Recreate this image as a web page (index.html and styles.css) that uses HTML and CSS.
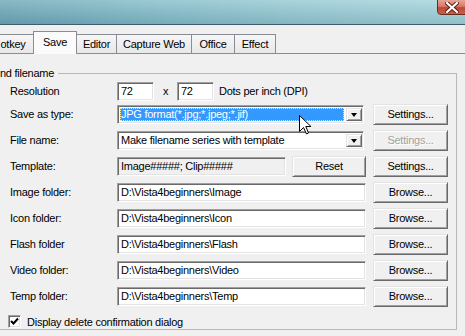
FILE: index.html
```html
<!DOCTYPE html>
<html>
<head>
<meta charset="utf-8">
<link rel="stylesheet" href="styles.css">
</head>
<body>
<div class="titlebar">
  <div class="close">
    <svg width="14" height="11" viewBox="0 0 14 11"><path d="M2 1 L12 10 M12 1 L2 10" stroke="#5a1a10" stroke-width="4" stroke-linecap="square"/><path d="M2 1 L12 10 M12 1 L2 10" stroke="#ffffff" stroke-width="2.2" stroke-linecap="square"/></svg>
  </div>
</div>
<div class="tabs">
  <div class="tab t-first">otkey</div>
  <div class="tab t-save active">Save</div>
  <div class="tab t-editor">Editor</div>
  <div class="tab t-capture">Capture Web</div>
  <div class="tab t-office">Office</div>
  <div class="tab t-effect">Effect</div>
</div>
<div class="panel">
  <fieldset class="group">
    <legend>nd filename</legend>
    <div class="row r-first">
      <span class="label">Resolution</span>
      <div class="field f-num">72</div>
      <span class="times">x</span>
      <div class="field f-num">72</div>
      <span class="unit">Dots per inch (DPI)</span>
    </div>
    <div class="row r-second">
      <span class="label">Save as type:</span>
      <div class="field f-select"><span class="sel">JPG format(*.jpg;*.jpeg;*.jif)</span><span class="drop"><span class="arrow"></span></span></div>
      <button class="btn b-after-select">Settings...</button>
    </div>
    <div class="row">
      <span class="label">File name:</span>
      <div class="field f-select"><span class="opt">Make filename series with template</span><span class="drop"><span class="arrow"></span></span></div>
      <button class="btn b-after-select disabled">Settings...</button>
    </div>
    <div class="row">
      <span class="label">Template:</span>
      <div class="field f-template">Image#####; Clip#####</div>
      <button class="btn b-reset">Reset</button>
      <button class="btn b-after-reset">Settings...</button>
    </div>
    <div class="row">
      <span class="label">Image folder:</span>
      <div class="field f-path">D:\Vista4beginners\Image</div>
      <button class="btn b-after-path">Browse...</button>
    </div>
    <div class="row">
      <span class="label">Icon folder:</span>
      <div class="field f-path">D:\Vista4beginners\Icon</div>
      <button class="btn b-after-path">Browse...</button>
    </div>
    <div class="row">
      <span class="label">Flash folder</span>
      <div class="field f-path">D:\Vista4beginners\Flash</div>
      <button class="btn b-after-path">Browse...</button>
    </div>
    <div class="row">
      <span class="label">Video folder:</span>
      <div class="field f-path">D:\Vista4beginners\Video</div>
      <button class="btn b-after-path">Browse...</button>
    </div>
    <div class="row">
      <span class="label">Temp folder:</span>
      <div class="field f-path">D:\Vista4beginners\Temp</div>
      <button class="btn b-after-path">Browse...</button>
    </div>
    <div class="check-row">
      <span class="checkbox"><svg width="9" height="9" viewBox="0 0 9 9"><path d="M1 4 L3.5 6.5 L8 1.5" fill="none" stroke="#000" stroke-width="2"/></svg></span>
      <span class="check-label">Display delete confirmation dialog</span>
    </div>
  </fieldset>
</div>
<svg class="cursor" width="13" height="20" viewBox="0 0 13 20"><path d="M0.5 0.5 L0.5 16.5 L4.5 12.5 L7.5 19 L9.5 18 L6.8 11.5 L12 11.5 Z" fill="#fff" stroke="#000" stroke-width="1" stroke-linejoin="miter"/></svg>
</body>
</html>
```
FILE: styles.css
```css
html, body {
  margin: 0;
  padding: 0;
}
body {
  width: 465px;
  height: 336px;
  overflow: hidden;
  position: relative;
  background: #f0f0f0;
  font-family: "Liberation Sans", Arial, sans-serif;
  font-size: 11px;
  letter-spacing: -0.25px;
  color: #000;
}
.titlebar {
  height: 24px;
  border-bottom: 1px solid #3f5d6b;
  position: relative;
  background:
    linear-gradient(180deg, rgba(255,255,255,0.18), rgba(0,40,60,0.12)),
    linear-gradient(90deg, #6fa9b9 0%, #86bfcb 35%, #98cbd5 65%, #a6d5dd 100%);
}
.close {
  position: absolute;
  right: -4px;
  top: -1px;
  width: 32px;
  height: 16px;
  box-sizing: border-box;
  border: 1px solid #6a2a20;
  border-radius: 0 0 0 4px;
  background: linear-gradient(180deg, #e7a497 0%, #d67a68 45%, #c0452f 55%, #c9614a 100%);
  display: flex;
  align-items: center;
  justify-content: center;
  padding-right: 2px;
}
.tabs {
  display: flex;
  align-items: flex-end;
  height: 28px;
}
.tab {
  box-sizing: border-box;
  height: 19px;
  border: 1px solid #898c95;
  border-bottom: none;
  margin-left: -1px;
  background: linear-gradient(180deg, #f6f6f6, #e8e8e8);
  display: flex;
  align-items: center;
  justify-content: center;
  white-space: nowrap;
}
.t-first { margin-left: -8px; width: 42px; }
.t-save { width: 44px; }
.t-editor { width: 41px; }
.t-capture { width: 76px; }
.t-office { width: 44px; }
.t-effect { width: 42px; }
.tab.active {
  height: 23px;
  padding-bottom: 3px;
  background: #fbfbfb;
  position: relative;
  z-index: 1;
  margin-bottom: -1px;
}
.panel {
  border-top: 1px solid #898c95;
  height: 282px;
}
.group {
  margin: 13px 0 0 -6px;
  width: 463px;
  box-sizing: border-box;
  border: 1px solid #b8b8b8;
  padding: 0 0 1px 0;
  min-width: 0;
}
.group legend {
  margin-left: 5px;
  padding: 0 4px 0 0;
  line-height: 13px;
  height: 13px;
}
.row {
  display: flex;
  align-items: center;
  height: 22px;
  margin-top: 4px;
  margin-left: 15px;
}
.r-first { height: 20px; margin-top: 1px; }
.r-second { margin-top: 2px; }
.label {
  width: 107px;
  flex: none;
  white-space: nowrap;
}
.field {
  box-sizing: border-box;
  height: 19px;
  border-style: solid;
  border-width: 1px;
  border-color: #a0a0a0 #ffffff #ffffff #a0a0a0;
  box-shadow: inset 1px 1px 0 #696969, inset -1px -1px 0 #e3e3e3;
  background: #fff;
  padding: 0 2px 0 3px;
  display: flex;
  align-items: center;
  white-space: nowrap;
  overflow: hidden;
  flex: none;
}
.f-num { width: 37px; }
.times {
  width: 23px;
  text-align: center;
  flex: none;
}
.unit {
  margin-left: 5px;
  white-space: nowrap;
}
.f-select {
  width: 247px;
  padding: 2px 1px 2px 2px;
  align-items: stretch;
}
.sel {
  flex: 1;
  background: #3399ff;
  color: #fff;
  outline: 1px dotted #f3e7a6;
  outline-offset: -1px;
  padding-left: 1px;
  display: flex;
  align-items: center;
  margin-right: 2px;
}
.opt {
  flex: 1;
  padding-left: 1px;
  display: flex;
  align-items: center;
}
.drop {
  width: 16px;
  flex: none;
  box-sizing: border-box;
  background: #f0f0f0;
  border-style: solid;
  border-width: 1px;
  border-color: #e3e3e3 #696969 #696969 #e3e3e3;
  box-shadow: inset 1px 1px 0 #fff, inset -1px -1px 0 #a0a0a0;
  display: flex;
  align-items: center;
  justify-content: center;
}
.arrow {
  width: 0;
  height: 0;
  border-left: 3.5px solid transparent;
  border-right: 3.5px solid transparent;
  border-top: 4px solid #000;
  margin-top: 1px;
}
.f-template {
  width: 169px;
  background: #f0f0f0;
}
.f-path { width: 249px; }
.btn {
  box-sizing: border-box;
  height: 21px;
  width: 75px;
  flex: none;
  padding: 0;
  margin: 0;
  font: inherit;
  letter-spacing: inherit;
  color: #000;
  background: #f0f0f0;
  border-style: solid;
  border-width: 1px;
  border-color: #e3e3e3 #696969 #696969 #e3e3e3;
  box-shadow: inset 1px 1px 0 #fff, inset -1px -1px 0 #a0a0a0;
  border-radius: 0;
  text-align: center;
}
.b-after-select { margin-left: 9px; }
.b-after-path { margin-left: 7px; }
.b-reset { margin-left: 6px; width: 74px; }
.b-after-reset { margin-left: 7px; }
.btn.disabled {
  color: #a0a0a0;
  text-shadow: 1px 1px 0 #fff;
}
.check-row {
  display: flex;
  align-items: center;
  height: 13px;
  margin-top: 8px;
  margin-left: 13px;
}
.checkbox {
  box-sizing: border-box;
  width: 13px;
  height: 13px;
  border-style: solid;
  border-width: 1px;
  border-color: #a0a0a0 #ffffff #ffffff #a0a0a0;
  box-shadow: inset 1px 1px 0 #696969, inset -1px -1px 0 #e3e3e3;
  background: #fff;
  display: flex;
  align-items: center;
  justify-content: center;
  flex: none;
}
.check-label {
  margin-left: 6px;
  white-space: nowrap;
}
.cursor {
  position: absolute;
  left: 299px;
  top: 115px;
  z-index: 5;
}
```
